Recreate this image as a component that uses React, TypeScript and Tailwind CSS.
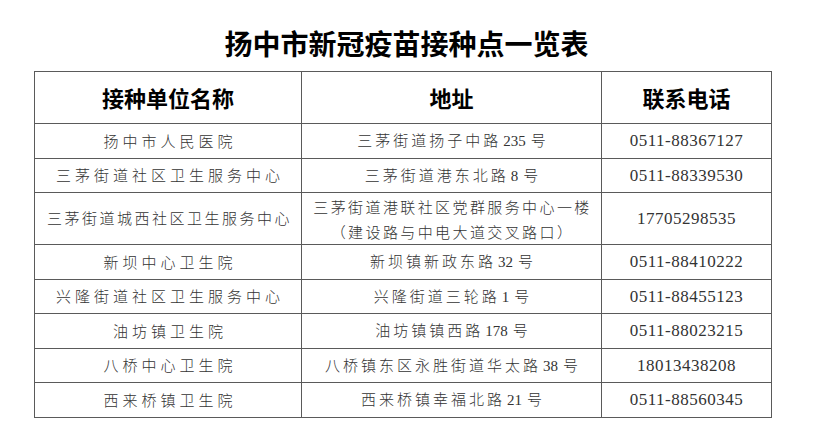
import React from "react";

function N({ children }: { children: React.ReactNode }) {
  return (
    <span className="tracking-normal text-[15px] [font-family:'Liberation_Serif',serif] ml-[2px] mr-[5px]">
      {children}
    </span>
  );
}

const rows: { name: string; narrow?: boolean; addr: React.ReactNode; phone: string; tall?: boolean }[] = [
  { name: "扬中市人民医院", addr: <>三茅街道扬子中路<N>235</N>号</>, phone: "0511-88367127" },
  { name: "三茅街道社区卫生服务中心", addr: <>三茅街道港东北路<N>8</N>号</>, phone: "0511-88339530" },
  {
    name: "三茅街道城西社区卫生服务中心",
    narrow: true,
    addr: (
      <>
        <div>三茅街道港联社区党群服务中心一楼</div>
        <div>（建设路与中电大道交叉路口）</div>
      </>
    ),
    phone: "17705298535",
    tall: true,
  },
  { name: "新坝中心卫生院", addr: <>新坝镇新政东路<N>32</N>号</>, phone: "0511-88410222" },
  { name: "兴隆街道社区卫生服务中心", addr: <>兴隆街道三轮路<N>1</N>号</>, phone: "0511-88455123" },
  { name: "油坊镇卫生院", addr: <>油坊镇镇西路<N>178</N>号</>, phone: "0511-88023215" },
  { name: "八桥中心卫生院", addr: <>八桥镇东区永胜街道华太路<N>38</N>号</>, phone: "18013438208" },
  { name: "西来桥镇卫生院", addr: <>西来桥镇幸福北路<N>21</N>号</>, phone: "0511-88560345" },
];

const cjk = "[font-family:'Noto_Sans_CJK_SC','Noto_Sans',sans-serif]";

export default function App() {
  return (
    <div className={`w-[813px] h-[433px] bg-white ${cjk} text-[#333]`}>
      <div className="pt-[26px] h-[71px]">
        <div className="text-center text-[28px] leading-[34px] font-bold text-black">
          扬中市新冠疫苗接种点一览表
        </div>
      </div>
      <div className="ml-[34px] w-[738px] border border-[#5a5a5a]">
        <div className="grid grid-cols-[267px_300px_1fr] h-[51px] text-[22px] font-bold text-black">
          <div className="flex items-center justify-center border-r border-[#5a5a5a]">接种单位名称</div>
          <div className="flex items-center justify-center border-r border-[#5a5a5a]">地址</div>
          <div className="flex items-center justify-center">联系电话</div>
        </div>
        {rows.map((r, i) => (
          <div
            key={i}
            className={`grid grid-cols-[267px_300px_1fr] border-t border-[#5a5a5a] ${r.tall ? "h-[52px]" : "h-[34.5px]"}`}
          >
            <div
              className={`flex items-center justify-center whitespace-nowrap border-r border-[#5a5a5a] text-[15px] font-light ${
                r.narrow ? "tracking-[2.5px] pl-[3px]" : "tracking-[4px] pl-[4px]"
              }`}
            >
              {r.name}
            </div>
            <div
              className={`flex flex-col items-center justify-center whitespace-nowrap border-r border-[#5a5a5a] text-[15px] font-light leading-[25px] ${
                r.tall ? "tracking-[2.4px] pl-[2px]" : "tracking-[3px] pl-[3px]"
              }`}
            >
              {r.tall ? r.addr : <div>{r.addr}</div>}
            </div>
            <div className="flex items-center justify-center text-[17px] tracking-[0.5px] [font-family:'Liberation_Serif',serif]">
              {r.phone}
            </div>
          </div>
        ))}
      </div>
    </div>
  );
}
